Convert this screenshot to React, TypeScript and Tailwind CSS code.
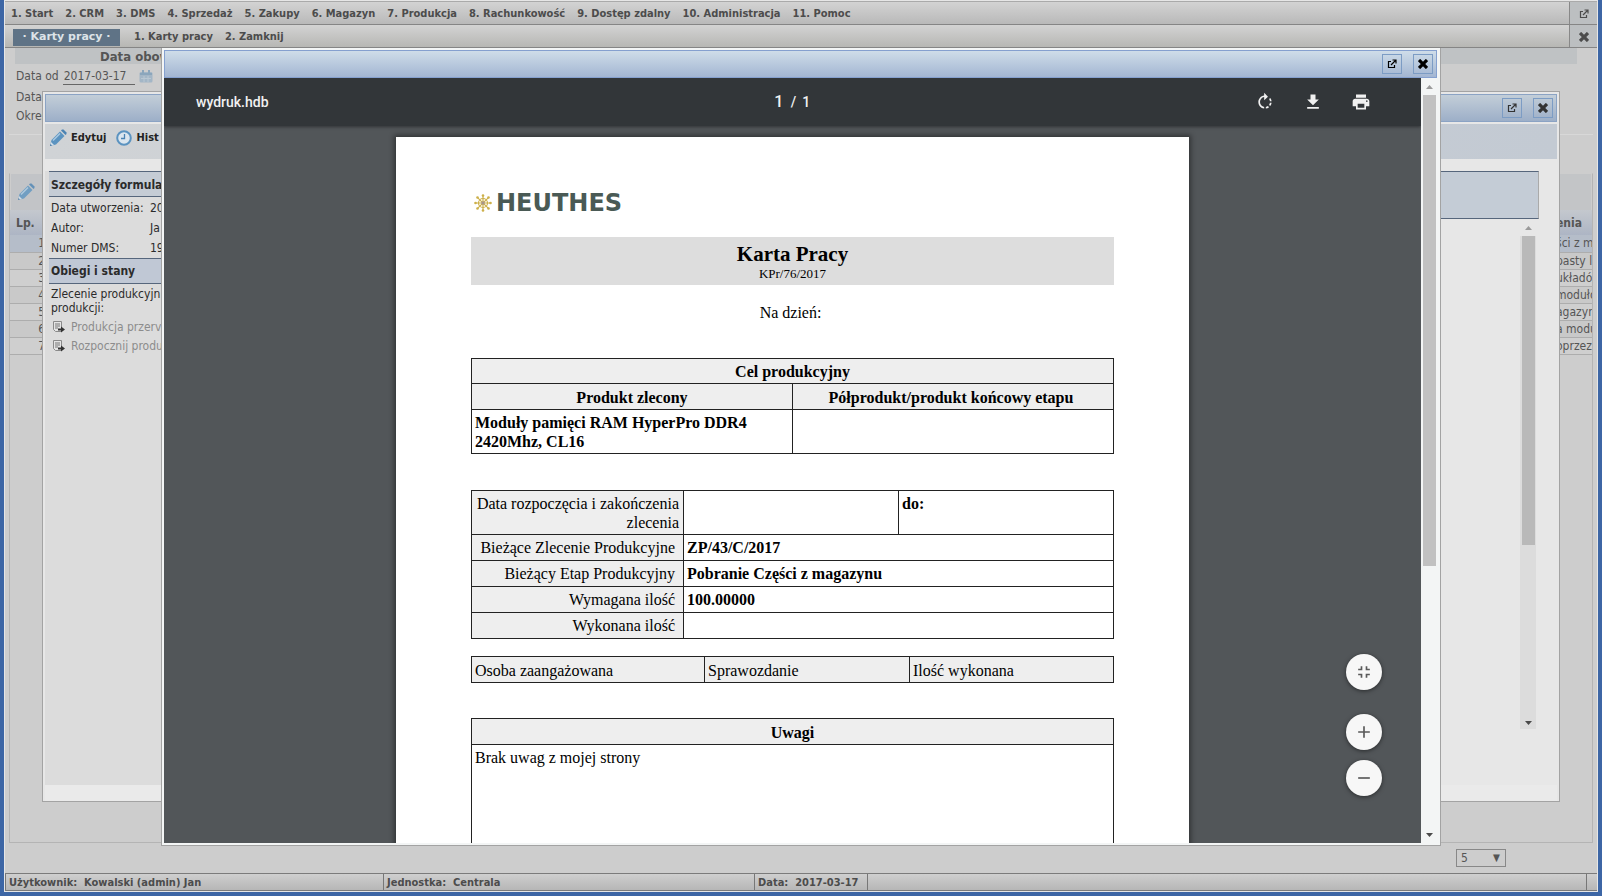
import React from "react";
import {
  MdAdd,
  MdDownload,
  MdFullscreenExit,
  MdPrint,
  MdRemove,
  MdRotateRight,
} from "react-icons/md";

const menuItems = [
  "1. Start",
  "2. CRM",
  "3. DMS",
  "4. Sprzedaż",
  "5. Zakupy",
  "6. Magazyn",
  "7. Produkcja",
  "8. Rachunkowość",
  "9. Dostęp zdalny",
  "10. Administracja",
  "11. Pomoc",
];

const rows = [
  { lp: 1, name: "ści z m" },
  { lp: 2, name: "pasty lu" },
  { lp: 3, name: "układó" },
  { lp: 4, name: "modułó" },
  { lp: 5, name: "agazyn" },
  { lp: 6, name: "a modu" },
  { lp: 7, name: "oprzez" },
];

const orderRows = [
  { label: "Bieżące Zlecenie Produkcyjne", value: "ZP/43/C/2017" },
  { label: "Bieżący Etap Produkcyjny", value: "Pobranie Części z magazynu" },
  { label: "Wymagana ilość", value: "100.00000" },
  { label: "Wykonana ilość", value: "" },
];

const details = [
  { label: "Data utworzenia:", value: "20" },
  { label: "Autor:", value: "Ja" },
  { label: "Numer DMS:", value: "19" },
];

const ExternalIcon = () => (
  <svg width="10" height="10" viewBox="0 0 10 10" fill="none" stroke="currentColor">
    <path d="M4 2.5H1.5v6h6V6" strokeWidth="1.2" />
    <path d="M4 6l4.5-4.5M5.5 1H9v3.5" strokeWidth="1.2" />
  </svg>
);

const CloseIcon = () => (
  <svg width="10" height="10" viewBox="0 0 10 10" stroke="currentColor" strokeWidth="3.2">
    <path d="M1 1l8 8M9 1L1 9" />
  </svg>
);

const PencilIcon = () => (
  <svg width="18" height="18" viewBox="0 0 18 18" className="shrink-0">
    <path d="M1 17l1.5-6L11 2.500l4.500 4.500L7 15.500z" fill="#5b93c0" />
    <path d="M12 1.500l1-1h1.500l3 3V5l-1 1z" fill="#4a83b3" />
    <path d="M4 11.500l7-7" stroke="#a9c9e2" strokeWidth="1.500" />
    <path d="M1 17l1-4 3 3z" fill="#d5e2ec" />
    <path d="M1 17l.5-2 1.500 1.500z" fill="#3a6c99" />
  </svg>
);

const ClockIcon = () => (
  <svg width="16" height="16" viewBox="0 0 16 16" fill="none" className="shrink-0">
    <circle cx="8" cy="8" r="6.800" stroke="#5b93c0" strokeWidth="2" fill="#dbe6ef" />
    <path d="M8.500 4v4.500H5" stroke="#4a83b3" strokeWidth="1.300" />
  </svg>
);

const CalendarIcon = () => (
  <svg width="14" height="13" viewBox="0 0 14 13" className="shrink-0">
    <rect x="0.500" y="2" width="13" height="10.500" rx="1.500" fill="#a3b6c6" />
    <path d="M1 4h12" stroke="#8ba6bc" strokeWidth="2" />
    <path d="M4 0v3M10 0v3" stroke="#8ba6bc" strokeWidth="2" />
    <path d="M2 8.500h10M5 6v6M9 6v6" stroke="#b9c7d2" />
  </svg>
);

const StepIcon = () => (
  <svg width="12" height="12" viewBox="0 0 12 12" fill="none" className="shrink-0">
    <path d="M.5.5h8v10h-6l-2-2z" fill="#e4e4e4" stroke="#8a8a8a" />
    <path d="M2 3h5M2 5h5M2 7h3" stroke="#777" />
    <path d="M5 8.500h4" stroke="#333" strokeWidth="2" />
    <path d="M8 5.500l4 3-4 3z" fill="#333" />
  </svg>
);

const LogoMark = () => (
  <svg width="18" height="18" viewBox="0 0 18 18" fill="none" className="shrink-0">
    <g stroke="#cdb04a" strokeWidth="1.200">
      <path d="M9 1v16M1 9h16M3.300 3.300l11.400 11.400M14.700 3.300L3.300 14.700" />
      <circle cx="9" cy="9" r="4.500" />
    </g>
    <g fill="#cdb04a">
      <circle cx="9" cy="1.500" r="1.300" />
      <circle cx="9" cy="16.500" r="1.300" />
      <circle cx="1.500" cy="9" r="1.300" />
      <circle cx="16.500" cy="9" r="1.300" />
      <circle cx="3.500" cy="3.500" r="1.300" />
      <circle cx="14.500" cy="3.500" r="1.300" />
      <circle cx="3.500" cy="14.500" r="1.300" />
      <circle cx="14.500" cy="14.500" r="1.300" />
    </g>
    <circle cx="9" cy="9" r="1.800" fill="#a8968c" />
  </svg>
);

const Arrow = ({ up = false }: { up?: boolean }) => (
  <svg width="7" height="4" viewBox="0 0 7 4" className="shrink-0">
    {up ? (
      <path d="M0 4l3.500-4L7 4z" fill="#9a9a9a" />
    ) : (
      <path d="M0 0h7L3.500 4z" fill="#4a4a4a" />
    )}
  </svg>
);

const WindowTitle = ({ dimmed = false }: { dimmed?: boolean }) => (
  <div
    className={
      dimmed
        ? "flex h-7 shrink-0 items-center justify-end gap-[11px] border border-[#8ba3c4] bg-gradient-to-b from-[#c3ced8] to-[#9dafc8] pr-[3px] text-[#333]"
        : "flex h-7 shrink-0 items-center justify-end gap-[11px] border border-[#85a0cf] bg-gradient-to-b from-[#cfdde9] to-[#a3b6d2] pr-[3px] text-black"
    }
  >
    <button
      aria-label="Otwórz w nowym oknie"
      className="flex size-5 items-center justify-center border border-[#7c9cc4]"
    >
      <ExternalIcon />
    </button>
    <button
      aria-label="Zamknij okno"
      className="flex size-5 items-center justify-center border border-[#7c9cc4]"
    >
      <CloseIcon />
    </button>
  </div>
);

const MenuBars = () => (
  <header className="text-[11px] font-bold text-[#4c4c4c]">
    <div className="flex h-6 items-stretch border-t border-b border-t-[#aaa] border-b-[#858585] bg-gradient-to-b from-[#d3d3d3] to-[#b9b9b9]">
      <nav className="flex flex-1 items-center gap-3 pt-0.5 pl-1.5">
        {menuItems.map((item) => (
          <a key={item} href="#" className="whitespace-nowrap">
            {item}
          </a>
        ))}
      </nav>
      <button
        aria-label="Nowe okno"
        className="flex w-7 items-center justify-center border-l border-[#888] bg-[#bcbfc1] pt-0.5"
      >
        <ExternalIcon />
      </button>
    </div>
    <div className="flex h-[23px] items-stretch border-b border-[#858585] bg-gradient-to-b from-[#d3d3d3] to-[#b7b7b4]">
      <nav className="flex flex-1 items-center gap-3 pt-0.5 pl-2">
        <span className="mr-0.5 flex h-[17px] w-[107px] items-center justify-center bg-[#5f7386] font-['DejaVu_Sans',sans-serif] whitespace-nowrap text-[#dde3e8]">
          · Karty pracy ·
        </span>
        <a href="#">1. Karty pracy</a>
        <a href="#">2. Zamknij</a>
      </nav>
      <button
        aria-label="Zamknij kartę"
        className="flex w-7 items-center justify-center border-l border-[#888] bg-[#bcbfc1] pt-0.5"
      >
        <CloseIcon />
      </button>
    </div>
  </header>
);

const ListPage = () => (
  <main className="flex flex-1 flex-col px-1 text-xs text-[#555]">
    <div className="mr-4 ml-1.5 flex h-4 items-center bg-[#bfc2c4] pt-0.5 pl-[85px] text-[13px] font-bold">
      Data obow
    </div>
    <div className="flex flex-col pr-1.5 pl-[7px]">
      <div className="flex h-6 items-center gap-1">
        <label htmlFor="from">Data od</label>
        <input
          id="from"
          defaultValue="2017-03-17"
          className="h-[18px] w-[72px] border-b border-[#666] pl-px text-xs"
        />
        <CalendarIcon />
      </div>
      <div className="flex h-[18px] items-center justify-between">
        <span className="w-[122px]">Data</span>
        <span className="flex-1">
          <CalendarIcon />
        </span>
      </div>
      <div className="flex h-5 items-center">Okres</div>
    </div>
    <div className="mt-2 h-px bg-[#d8d8d8]" />
    <section className="mt-[38px] flex flex-1 flex-col border border-[#b4b4b4] border-t-transparent">
      <div className="mx-px flex h-9 shrink-0 items-center bg-[#c0c3c6] pl-1.5 opacity-80">
        <PencilIcon />
      </div>
      <table className="w-full table-fixed border-collapse">
        <thead>
          <tr className="h-[25px] bg-gradient-to-b from-[#c4c8ce] to-[#adb5c4] text-left">
            <th className="w-[35px] pl-1.5 text-xs">Lp.</th>
            <th />
            <th className="w-9 overflow-hidden text-xs">enia</th>
          </tr>
        </thead>
        <tbody>
          {rows.map((row) => (
            <tr
              key={row.lp}
              className="h-[17px] border-b border-[#adadad] bg-[#cfcfcf] leading-4 first:bg-[#b5bdc9] even:bg-[#c9c9c9]"
            >
              <td className="text-right">{row.lp}</td>
              <td />
              <td className="overflow-hidden whitespace-nowrap">{row.name}</td>
            </tr>
          ))}
        </tbody>
      </table>
    </section>
    <div className="flex h-[30px] items-center justify-end pr-[87px]">
      <div className="relative">
        <select
          aria-label="Liczba wierszy"
          className="h-[18px] w-[50px] appearance-none border border-[#888] pl-1 text-xs"
        >
          <option>5</option>
        </select>
        <span className="pointer-events-none absolute top-0.5 right-1.5 text-[10px] leading-[14px]">
          ▼
        </span>
      </div>
    </div>
  </main>
);

const StatusBar = () => (
  <footer className="flex h-[18px] items-stretch border-y border-[#7b7b7b] bg-gradient-to-b from-[#cfcfcf] to-[#b6b6b6] text-[11px] leading-[17px] font-bold text-[#4c4c4c]">
    <span className="w-[378px] border-l border-[#777] pl-[3px]">
      Użytkownik:&nbsp; Kowalski (admin) Jan
    </span>
    <span className="w-[371px] border-l border-[#777] pl-[3px]">
      Jednostka:&nbsp; Centrala
    </span>
    <span className="w-[113px] border-l border-[#777] pl-[3px] whitespace-nowrap">
      Data:&nbsp; 2017-03-17
    </span>
    <span className="flex-1 border-x border-[#777]" />
    <span className="w-2.5" />
  </footer>
);

const FormWindow = () => (
  <section className="absolute top-[90px] right-[37px] bottom-[89px] left-[37px] flex flex-col border border-[#a3a3a3] bg-[#e7e7e7] px-0.5 pt-0.5 text-xs text-[#2b2b2b]">
    <WindowTitle dimmed />
    <div className="mt-0.5 flex h-[35px] shrink-0 bg-gradient-to-r from-[#d0d3d6] to-[#c3cad3] pt-1.5 pl-1">
      <div className="flex h-4 items-center text-[11px] font-bold">
        <PencilIcon />
        <a href="#" className="ml-1 text-[#222]">
          Edytuj
        </a>
        <span className="ml-2.5">
          <ClockIcon />
        </span>
        <a href="#" className="ml-1 text-[#222]">
          Hist
        </a>
      </div>
    </div>
    <div className="flex min-h-0 flex-1 pt-3">
      <aside className="w-[300px] bg-[#dcdcdc] pl-1">
        <h2 className="flex h-[26px] items-center border-y border-[#56667c] bg-[#c5ccd5] pt-px pl-0.5 text-xs font-bold">
          Szczegóły formula
        </h2>
        <dl className="pt-px">
          {details.map(({ label, value }) => (
            <div key={label} className="flex h-5 items-center pl-0.5">
              <dt className="w-[99px]">{label}</dt>
              <dd>{value}</dd>
            </div>
          ))}
        </dl>
        <h2 className="flex h-[26px] items-center border-y border-[#56667c] bg-[#c0c8d5] pl-0.5 text-xs font-bold">
          Obiegi i stany
        </h2>
        <p className="mt-[3px] pl-0.5 leading-[14px]">
          Zlecenie produkcyjn
          <br />
          produkcji:
        </p>
        <ul className="mt-0.5 pl-1 text-[#8c8c8c]">
          <li className="flex h-[19px] items-center gap-1.5">
            <StepIcon />
            Produkcja przerv
          </li>
          <li className="flex h-[19px] items-center gap-1.5">
            <StepIcon />
            Rozpocznij produ
          </li>
        </ul>
      </aside>
      <div className="flex flex-1 flex-col items-end pr-[18px] pb-[56px]">
        <div className="h-12 w-full shrink-0 border-y border-r border-[#56667c] border-r-[#aaa] bg-[#c4ccd6]" />
        <div className="mr-[3px] flex w-4 flex-1 flex-col items-center bg-[#dcdcdc] pb-1">
          <div className="flex h-[17px] w-full shrink-0 items-center justify-center bg-[#e7e7e7]">
            <Arrow up />
          </div>
          <div className="h-[61%] w-[13px] bg-[#b9b9b9]" />
          <div className="flex-1" />
          <Arrow />
        </div>
      </div>
    </div>
    <div className="h-4 shrink-0 bg-[#eaeaea]" />
  </section>
);

const Logo = () => (
  <div className="flex h-9 items-center gap-1 pl-[3px]">
    <LogoMark />
    <span className="font-['DejaVu_Sans',sans-serif] text-2xl leading-none font-bold text-[#4a5a55]">
      HEUTHES
    </span>
  </div>
);

const Document = () => (
  <article className="mx-auto mt-[11px] h-[1122px] w-[793px] bg-white px-[75px] pt-12 font-['Liberation_Serif',serif] text-base leading-[19px] text-black shadow-[0_0_5px_2px_rgba(0,0,0,0.4)]">
    <Logo />
    <div className="mt-4 h-12 bg-[#dddddd] pt-[5px] text-center">
      <h1 className="text-[21px] leading-6 font-bold">Karta Pracy</h1>
      <p className="text-[13px] leading-4">KPr/76/2017</p>
    </div>
    <p className="mt-[18px] pr-1 text-center leading-5">Na dzień:</p>

    {/* Cel produkcyjny */}
    <table className="mt-[35px] w-full table-fixed border-collapse font-bold [&_td]:border [&_td]:border-[#222] [&_td]:px-[3px] [&_td]:pt-[3px] [&_td]:pb-0.5 [&_th]:border [&_th]:border-[#222] [&_th]:bg-[#eeeeee] [&_th]:pt-[3px] [&_th]:pb-0.5">
      <thead>
        <tr>
          <th colSpan={2}>Cel produkcyjny</th>
        </tr>
        <tr className="h-[26px]">
          <th>Produkt zlecony</th>
          <th className="pr-1">Półprodukt/produkt końcowy etapu</th>
        </tr>
      </thead>
      <tbody>
        <tr>
          <td>
            Moduły pamięci RAM HyperPro DDR4
            <br />
            2420Mhz, CL16
          </td>
          <td />
        </tr>
      </tbody>
    </table>

    {/* Zlecenie */}
    <table className="mt-9 w-full table-fixed border-collapse [&_td]:border [&_td]:border-[#222] [&_td]:px-[3px] [&_td]:pt-[3px] [&_td]:pb-0.5 [&_td]:align-top [&_td]:font-bold [&_th]:border [&_th]:border-[#222] [&_th]:bg-[#eeeeee] [&_th]:pt-[3px] [&_th]:pb-0.5 [&_th]:text-right [&_th]:align-top [&_th]:font-normal">
      <colgroup>
        <col className="w-[212px]" />
        <col />
        <col />
      </colgroup>
      <tbody>
        <tr>
          <th className="pr-1">
            Data rozpoczęcia i zakończenia
            <br />
            zlecenia
          </th>
          <td />
          <td>do:</td>
        </tr>
        {orderRows.map(({ label, value }) => (
          <tr key={label} className="h-[26px]">
            <th className="pr-2">{label}</th>
            <td colSpan={2}>{value}</td>
          </tr>
        ))}
      </tbody>
    </table>

    <table className="mt-[17px] w-full table-fixed border-collapse text-left [&_th]:border [&_th]:border-[#222] [&_th]:bg-[#eeeeee] [&_th]:px-[3px] [&_th]:pt-[3px] [&_th]:pb-0.5 [&_th]:font-normal">
      <thead>
        <tr className="h-[26px]">
          <th className="w-[233px]">Osoba zaangażowana</th>
          <th className="w-[205px]">Sprawozdanie</th>
          <th>Ilość wykonana</th>
        </tr>
      </thead>
    </table>

    {/* Uwagi */}
    <table className="mt-[35px] w-full border-collapse">
      <thead>
        <tr className="h-[26px]">
          <th className="border border-[#222] bg-[#eeeeee] pt-[3px] pb-0.5">
            Uwagi
          </th>
        </tr>
      </thead>
      <tbody>
        <tr>
          <td className="h-40 border border-[#222] px-[3px] pt-[3px] align-top">
            Brak uwag z mojej strony
          </td>
        </tr>
      </tbody>
    </table>
  </article>
);

const roundButton =
  "flex size-9 items-center justify-center rounded-full bg-[#f7f7f7] text-[#5a5a5a] shadow-[0_1px_4px_rgba(0,0,0,0.5)]";

const PrintWindow = () => (
  <section className="absolute top-[47px] right-[156px] bottom-[45px] left-[156px] flex flex-col border border-t-0 border-[#a3a3a3] bg-[#f3f5f5] px-0.5 pt-0.5 pb-0.5">
    <div className="pr-px">
      <WindowTitle />
    </div>
    <div className="flex min-h-0 flex-1">
      <div className="relative flex min-w-0 flex-1 flex-col overflow-hidden bg-[#525659]">
        <div className="relative grid h-12 shrink-0 grid-cols-3 items-center bg-[#323639] pr-[50px] pl-8 font-['Roboto',sans-serif] text-sm font-medium text-[#f1f1f1] shadow-[0_1px_3px_rgba(0,0,0,0.4)]">
          <span>wydruk.hdb</span>
          <div className="flex items-center justify-center gap-1.5 pl-4">
            <input
              aria-label="Strona"
              defaultValue="1"
              className="w-3 text-center text-base font-medium"
            />
            <span>/</span>
            <span>1</span>
          </div>
          <div className="flex justify-end gap-7">
            <button aria-label="Obróć">
              <MdRotateRight size={20} />
            </button>
            <button aria-label="Pobierz">
              <MdDownload size={20} />
            </button>
            <button aria-label="Drukuj">
              <MdPrint size={20} />
            </button>
          </div>
        </div>
        <div className="min-h-0 flex-1 overflow-hidden">
          <Document />
        </div>
        <div className="absolute right-[39px] bottom-[47px] flex flex-col items-center">
          <button aria-label="Dopasuj do strony" className={roundButton}>
            <MdFullscreenExit size={20} />
          </button>
          <button aria-label="Powiększ" className={`mt-6 ${roundButton}`}>
            <MdAdd size={20} />
          </button>
          <button aria-label="Pomniejsz" className={`mt-2.5 ${roundButton}`}>
            <MdRemove size={20} />
          </button>
        </div>
      </div>
      <div className="flex w-[17px] flex-col items-center pb-1.5">
        <div className="flex h-[17px] w-full shrink-0 items-center justify-center">
          <Arrow up />
        </div>
        <div className="h-[62%] w-[13px] bg-[#c1c1c1]" />
        <div className="flex-1" />
        <Arrow />
      </div>
    </div>
  </section>
);

export default function App() {
  return (
    <div className="flex min-h-screen flex-col border-x-4 border-b-4 border-[#3d66a5] font-['DejaVu_Sans_Condensed','DejaVu_Sans',sans-serif]">
      <div className="relative flex flex-1 flex-col border border-[#e6e6e6] bg-[#cdcdcd]">
        <MenuBars />
        <ListPage />
        <StatusBar />
        <FormWindow />
        <PrintWindow />
      </div>
    </div>
  );
}
